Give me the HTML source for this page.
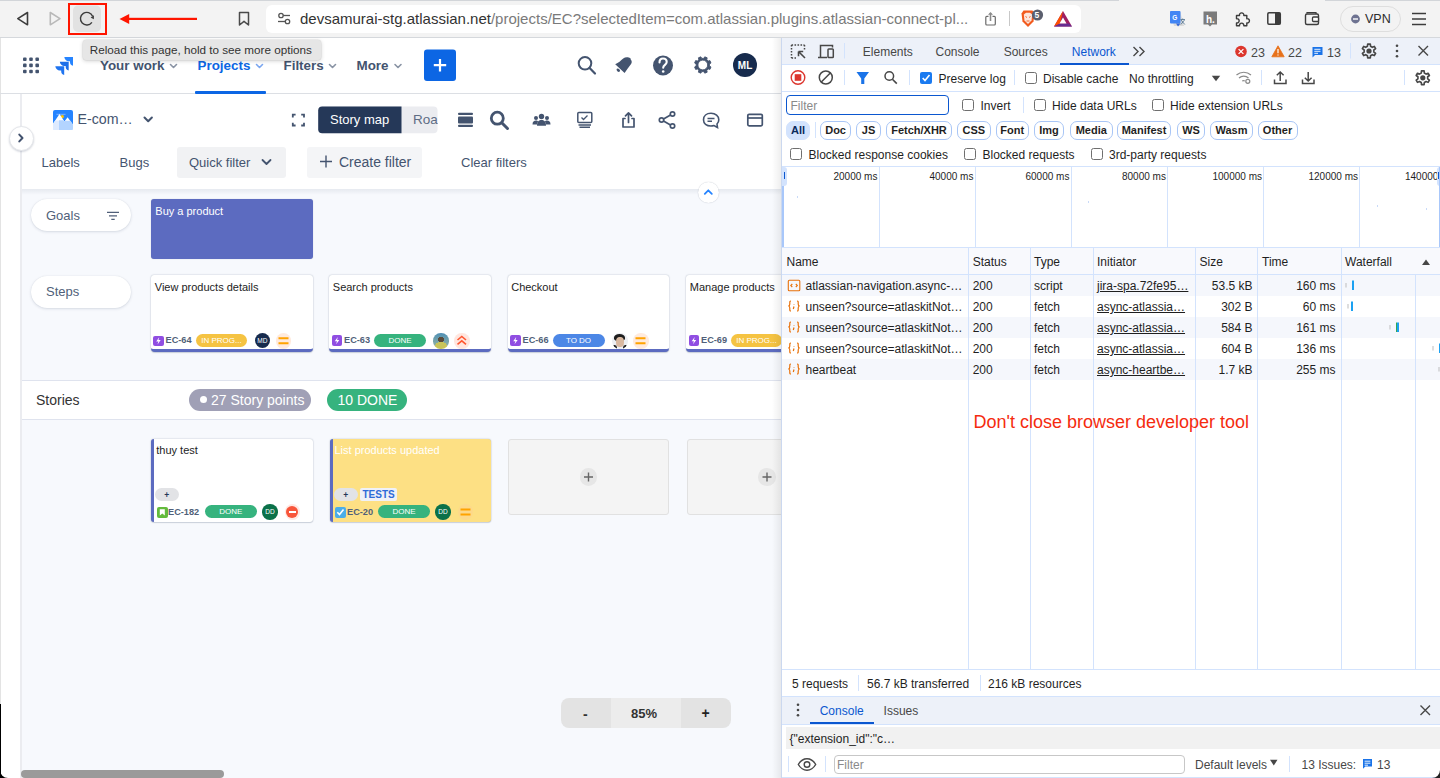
<!DOCTYPE html>
<html><head><meta charset="utf-8">
<style>
*{box-sizing:border-box;margin:0;padding:0}
html,body{width:1440px;height:778px;overflow:hidden;background:#fff}
body{position:relative;font-family:"Liberation Sans",sans-serif;color:#172b4d}
.a{position:absolute}
.t{position:absolute;white-space:nowrap;line-height:1}
svg{position:absolute;overflow:visible}
</style></head><body>

<!-- ============ BROWSER TOOLBAR ============ -->
<div class="a" style="left:0;top:0;width:1440px;height:38px;background:#f3f3f3;border-top:1px solid #d2d5d9;border-bottom:1px solid #d5d8dc"></div>
<div class="a" style="left:1119px;top:0;width:206px;height:1px;background:#f3f3f3"></div>
<!-- back / fwd / reload -->
<svg style="left:0;top:0" width="1440" height="38">
 <path d="M27.5 12.5 L27.5 24.8 L17.8 18.6 Z" fill="none" stroke="#3c3c3c" stroke-width="1.6" stroke-linejoin="round"/>
 <path d="M50.3 12.5 L50.3 24.8 L60 18.6 Z" fill="none" stroke="#b9b9b9" stroke-width="1.6" stroke-linejoin="round"/>
 <rect x="73" y="5.5" width="28" height="26.5" rx="5" fill="#e2e2e2"/>
 <path d="M92.6 16.3 A6.3 6.3 0 1 0 91.9 22.3" fill="none" stroke="#3c3c3c" stroke-width="1.4"/>
 <path d="M90.6 17.5 L94 15.3 L93.8 19.3 Z" fill="#3c3c3c"/>
 <!-- bookmark -->
 <path d="M239.5 12.5 H248.5 V25 L244 21.3 L239.5 25 Z" fill="none" stroke="#4a4a4a" stroke-width="1.5" stroke-linejoin="round"/>
</svg>
<!-- url bar -->
<div class="a" style="left:266px;top:5px;width:815px;height:27.5px;background:#fff;border-radius:6px"></div>
<svg style="left:0;top:0" width="1440" height="38">
 <g stroke="#555" stroke-width="1.3" fill="none">
  <circle cx="281" cy="15.5" r="2.2"/><line x1="283.2" y1="15.5" x2="290" y2="15.5"/>
  <circle cx="287.5" cy="21.5" r="2.2"/><line x1="278" y1="21.5" x2="285.3" y2="21.5"/>
 </g>
 <!-- share -->
 <g stroke="#6a6a6a" stroke-width="1.2" fill="none" stroke-linejoin="round">
  <path d="M988.5 16.3 H986.8 A1 1 0 0 0 985.8 17.3 V24 A1 1 0 0 0 986.8 25 H994.3 A1 1 0 0 0 995.3 24 V17.3 A1 1 0 0 0 994.3 16.3 H992.5"/>
 </g>
 <path d="M990.5 21 V13" stroke="#8a8a8a" stroke-width="1.6"/>
 <path d="M988 14.8 L990.5 12 L993 14.8 Z" fill="#8a8a8a"/>
 <line x1="1009.5" y1="11" x2="1009.5" y2="26" stroke="#c8c8c8" stroke-width="1"/>
 <!-- brave lion -->
 <path d="M1021.5 13.5 L1023.5 10.5 H1032.5 L1034.5 13.5 L1033.5 21.5 L1028 27 L1022.5 21.5 Z" fill="#f25a1d"/>
 <path d="M1023.8 14.5 L1026 12.8 H1030 L1032.3 14.5 L1031.5 20.5 L1028 24 L1024.5 20.5 Z" fill="#fff" opacity=".85"/><path d="M1025.5 16.5 L1027 17.5 M1030.5 16.5 L1029 17.5 M1026.5 21 H1029.5" stroke="#f25a1d" stroke-width=".9"/>
 <circle cx="1037.5" cy="15" r="5.6" fill="#5b5f6e"/>
 <!-- BAT triangle -->
 <path d="M1063 11 L1072 26.5 H1054 Z" fill="#9e1f63"/>
 <path d="M1063 11 L1054 26.5 L1060 23.5 Z" fill="#ff5000"/>
 <path d="M1054 26.5 H1072 L1069 23.5 H1060 Z" fill="#662d91"/>
 <path d="M1063 17.5 L1066.5 23.5 H1059.5 Z" fill="#fff"/>
 <!-- translate -->
 <path d="M1170 11 H1180 L1184 26 H1174 Z" fill="#dadada"/>
 <rect x="1170" y="11" width="10.5" height="12.5" rx="1" fill="#4285f4"/>
 <path d="M1176 23.5 L1180.5 23.5 L1178 26.5 Z" fill="#3367d6"/>
 <text x="1172.3" y="20.3" font-family="Liberation Sans" font-size="6.5" font-weight="700" fill="#fff">G</text>
 <path d="M1180.5 19.5 H1185 M1182.7 18.5 V19.5 M1181 20 L1184.8 24.5 M1184.5 20 L1180.8 24.5" stroke="#4a6d8c" stroke-width=".8" fill="none"/>
 <!-- h. -->
 <path d="M1203.5 11.5 H1217 V24.5 H1212 L1210 26.5 L1208 24.5 H1203.5 Z" fill="#7b7b7b"/>
 <text x="1206" y="22.5" font-family="Liberation Sans" font-size="10" font-weight="700" fill="#fff">h.</text>
 <!-- puzzle -->
 <path d="M1236.5 15.5 H1239.5 A2.2 2.2 0 1 1 1243.8 15.5 H1246.8 V18.7 A2.2 2.2 0 1 1 1246.8 23 V25.8 H1243.8 A2.2 2.2 0 1 0 1239.5 25.8 H1236.5 V23 A2.2 2.2 0 1 0 1236.5 18.7 Z" fill="none" stroke="#3c3c3c" stroke-width="1.4" stroke-linejoin="round"/>
 <!-- sidebar -->
 <rect x="1267.8" y="12.8" width="12.5" height="11.5" rx="1.2" fill="none" stroke="#3c3c3c" stroke-width="1.5"/>
 <rect x="1275" y="12.8" width="5.3" height="11.5" fill="#3c3c3c"/>
 <!-- wallet -->
 <rect x="1305.5" y="14" width="13" height="10.5" rx="1.5" fill="none" stroke="#3c3c3c" stroke-width="1.4"/>
 <path d="M1307 13.5 L1307 12.5 H1316 V14" fill="none" stroke="#3c3c3c" stroke-width="1.2"/>
 <rect x="1312.5" y="17" width="6" height="4.5" rx="1" fill="#fff" stroke="#3c3c3c" stroke-width="1.3"/>
 <!-- vpn pill -->
 <rect x="1340.5" y="6.5" width="60" height="25" rx="12.5" fill="#f3f3f3" stroke="#dedede"/>
 <circle cx="1355.5" cy="19" r="4.4" fill="#6e7391"/>
 <line x1="1353" y1="19" x2="1358" y2="19" stroke="#fff" stroke-width="1.4"/>
 <!-- hamburger -->
 <g stroke="#3c3c3c" stroke-width="1.5"><line x1="1412" y1="13.5" x2="1426" y2="13.5"/><line x1="1412" y1="19" x2="1426" y2="19"/><line x1="1412" y1="24.5" x2="1426" y2="24.5"/></g>
</svg>
<div class="t" style="left:1034.6px;top:10.5px;font-size:8.5px;font-weight:700;color:#fff">5</div>
<div class="t" style="left:300px;top:11.4px;font-size:15px;color:#333">devsamurai-stg.atlassian.net<span style="color:#7a7a7a">/projects/EC?selectedItem=com.atlassian.plugins.atlassian-connect-pl...</span></div>
<div class="t" style="left:1365px;top:13px;font-size:12.5px;color:#2c2c2c">VPN</div>

<!-- ============ JIRA ============ -->
<div class="a" id="jira" style="left:0;top:0;width:781px;height:778px;overflow:hidden">
<div class="a" style="left:0;top:38px;width:781px;height:740px;background:#fff"></div>
<!-- left window edge -->
<div class="a" style="left:0;top:38px;width:1px;height:740px;background:#e3e3e3"></div>
<!-- header -->
<div class="a" style="left:0;top:92.5px;width:781px;height:1px;background:#dcdfe4"></div>
<svg style="left:0;top:0" width="781" height="100">
 <g fill="#44546f">
  <rect x="23" y="57.5" width="3.6" height="3.6" rx="1"/><rect x="29.2" y="57.5" width="3.6" height="3.6" rx="1"/><rect x="35.4" y="57.5" width="3.6" height="3.6" rx="1"/>
  <rect x="23" y="63.6" width="3.6" height="3.6" rx="1"/><rect x="29.2" y="63.6" width="3.6" height="3.6" rx="1"/><rect x="35.4" y="63.6" width="3.6" height="3.6" rx="1"/>
  <rect x="23" y="69.7" width="3.6" height="3.6" rx="1"/><rect x="29.2" y="69.7" width="3.6" height="3.6" rx="1"/><rect x="35.4" y="69.7" width="3.6" height="3.6" rx="1"/>
 </g>
 <!-- jira logo -->
 <g>
  <path d="M64.3 57 H73 V65.8 C71 65.5 70 64 70 62 V61.2 H68.5 C66.5 61.2 64.6 59.5 64.3 57 Z" fill="#2684ff"/>
  <path d="M59.8 61.7 H68.7 V70.5 C66.7 70.2 65.7 68.7 65.7 66.7 V65.9 H64.2 C62.2 65.9 60.1 64.2 59.8 61.7 Z" fill="#1d6fe8"/>
  <path d="M55.3 66.2 H64.2 V75 C62.2 74.7 61.2 73.2 61.2 71.2 V70.4 H59.7 C57.7 70.4 55.6 68.7 55.3 66.2 Z" fill="#1f74f0"/>
 </g>
 <!-- chevrons -->
 <g fill="none" stroke="#8993a4" stroke-width="1.6" stroke-linecap="round" stroke-linejoin="round">
  <path d="M170.5 64.5 L173.5 67.5 L176.5 64.5"/>
  <path d="M329.5 64.5 L332.5 67.5 L335.5 64.5"/>
  <path d="M395 64.5 L398 67.5 L401 64.5"/>
 </g>
 <path d="M256.5 64.5 L259.5 67.5 L262.5 64.5" fill="none" stroke="#7aa6f0" stroke-width="1.6" stroke-linecap="round" stroke-linejoin="round"/>
 <!-- plus button -->
 <rect x="424" y="49.5" width="32" height="31.5" rx="3" fill="#0c66e4"/>
 <path d="M440 59 V71.5 M433.8 65.2 H446.2" stroke="#fff" stroke-width="2.2"/>
 <!-- search -->
 <circle cx="585" cy="63.3" r="6.3" fill="none" stroke="#44546f" stroke-width="2"/>
 <path d="M589.6 68 L595 73.5" stroke="#44546f" stroke-width="2.2" stroke-linecap="round"/>
 <!-- bell (tilted) -->
 <g fill="#44546f">
  <path d="M615.2 64.2 C618.5 62.8 620.8 60.5 623.2 58.4 C625.3 56.8 628.6 56.9 630.2 58.3 L630.7 58.4 L630.6 59.3 C632 60.8 632.2 62.8 630.9 64.3 C628.9 67.3 626.5 70 624.6 73 Z"/>
  <ellipse cx="618.3" cy="70.2" rx="2" ry="1.4" transform="rotate(45 618.3 70.2)"/>
 </g>
 <!-- help -->
 <circle cx="663" cy="65.5" r="10" fill="#44546f"/>
 <path d="M659.5 62.5 C659.5 59.5 661.3 58.5 663 58.5 C665.2 58.5 666.7 60 666.7 62 C666.7 64.8 663.2 65 663.2 67.8" fill="none" stroke="#fff" stroke-width="2.1" stroke-linecap="round"/>
 <circle cx="663.2" cy="71.5" r="1.3" fill="#fff"/>
 <!-- gear -->
 <g transform="translate(702.8 65)">
  <path fill="#44546f" fill-rule="evenodd" stroke="#44546f" stroke-width="0.9" stroke-linejoin="round" d="M1.05 -6.62 L1.96 -8.17 L4.39 -7.16 L3.94 -5.42 L5.42 -3.94 L7.16 -4.39 L8.17 -1.96 L6.62 -1.05 L6.62 1.05 L8.17 1.96 L7.16 4.39 L5.42 3.94 L3.94 5.42 L4.39 7.16 L1.96 8.17 L1.05 6.62 L-1.05 6.62 L-1.96 8.17 L-4.39 7.16 L-3.94 5.42 L-5.42 3.94 L-7.16 4.39 L-8.17 1.96 L-6.62 1.05 L-6.62 -1.05 L-8.17 -1.96 L-7.16 -4.39 L-5.42 -3.94 L-3.94 -5.42 L-4.39 -7.16 L-1.96 -8.17 L-1.05 -6.62 Z M4.9 0 A4.9 4.9 0 1 0 -4.9 0 A4.9 4.9 0 1 0 4.9 0 Z"/>
 </g>
 <!-- avatar -->
 <circle cx="745" cy="65" r="12" fill="#172b4d"/>
</svg>
<div class="t" style="left:100px;top:59.3px;font-size:13.4px;font-weight:700;color:#44546f">Your work</div>
<div class="t" style="left:197.5px;top:59.3px;font-size:13.4px;font-weight:700;color:#0c66e4">Projects</div>
<div class="t" style="left:283.5px;top:59.3px;font-size:13.4px;font-weight:700;color:#44546f">Filters</div>
<div class="t" style="left:356.5px;top:59.3px;font-size:13.4px;font-weight:700;color:#44546f">More</div>
<div class="a" style="left:195px;top:90.5px;width:70.5px;height:3px;background:#0c66e4;border-radius:1px"></div>
<div class="t" style="left:737.8px;top:60.8px;font-size:10px;font-weight:700;color:#fff">ML</div>

<!-- sidebar strip -->
<div class="a" style="left:20px;top:93.5px;width:2px;height:685px;background:#ebecf0"></div>

<!-- project toolbar -->
<svg style="left:0;top:0" width="781" height="200">
 <!-- project avatar -->
 <rect x="53" y="110" width="20" height="20" rx="2" fill="#2684ff"/>
 <path d="M56.5 114.3 H65.5" stroke="#7fb3ff" stroke-width="1"/>
 <circle cx="62.3" cy="116.6" r="1.7" fill="#ffc400"/>
 <path d="M53 123.8 L59.5 114.1 L64.4 121.5 L67.6 117.2 L73 124.8 V128.5 A1.5 1.5 0 0 1 71.5 130 H54.5 A1.5 1.5 0 0 1 53 128.5 Z" fill="#fff"/>
 <path d="M53 123.8 L55.2 120.5 H59 V130 H54.5 A1.5 1.5 0 0 1 53 128.5 Z" fill="#deebff"/>
 <path d="M59 120.3 H63.2 L64.4 121.5 L65.3 120.8 H70.6 L73 124.8 V128.5 A1.5 1.5 0 0 1 71.5 130 H59 Z" fill="#b3d4ff"/>
 <path d="M144.5 117.5 L148.2 121.2 L151.9 117.5" fill="none" stroke="#44546f" stroke-width="2" stroke-linecap="round" stroke-linejoin="round"/>
 <!-- fullscreen -->
 <g fill="none" stroke="#44546f" stroke-width="1.8">
  <path d="M292.8 117.5 V114.7 H295.6 M301.2 114.7 H304 V117.5 M304 122.7 V125.5 H301.2 M295.6 125.5 H292.8 V122.7"/>
 </g>
 <!-- segmented -->
 <rect x="318.2" y="106.6" width="119.3" height="26.6" rx="4" fill="#ebecf0"/>
 <path d="M322.2 106.6 H401.5 V133.2 H322.2 A4 4 0 0 1 318.2 129.2 V110.6 A4 4 0 0 1 322.2 106.6 Z" fill="#253858"/>
 <!-- stacked icon -->
 <g fill="#44546f">
  <rect x="458" y="112.7" width="15" height="2.3" rx="1"/>
  <rect x="458" y="116.5" width="15" height="7" rx="1"/>
  <rect x="458" y="124.7" width="15" height="2.2" rx="1"/>
 </g>
 <!-- search big -->
 <circle cx="497.3" cy="118.2" r="6" fill="none" stroke="#44546f" stroke-width="2.8"/>
 <path d="M502 123 L507.5 128.5" stroke="#44546f" stroke-width="3" stroke-linecap="round"/>
 <!-- people -->
 <g fill="#44546f">
  <circle cx="541.5" cy="116.5" r="2.7"/><circle cx="536" cy="118" r="2"/><circle cx="547" cy="118" r="2"/>
  <path d="M537 125.8 C537 121.5 539 120 541.5 120 C544 120 546 121.5 546 125.8 Z"/>
  <path d="M532.5 124.5 C532.5 121.5 534 120.5 536 120.5 C537 120.5 537.8 121 538.2 121.5 C537.5 122.5 537 123.5 537 124.5 Z"/>
  <path d="M550.5 124.5 C550.5 121.5 549 120.5 547 120.5 C546 120.5 545.2 121 544.8 121.5 C545.5 122.5 546 123.5 546 124.5 Z"/>
 </g>
 <!-- board -->
 <g fill="none" stroke="#44546f" stroke-width="1.5">
  <rect x="577.8" y="112.6" width="14" height="10" rx="1"/>
  <path d="M581.5 117.5 L583.5 119.5 L587.5 115.5" stroke-width="1.3"/>
  <path d="M578.5 125 H591 M579.5 127.3 H590"/>
 </g>
 <!-- share up -->
 <g fill="none" stroke="#44546f" stroke-width="1.7" stroke-linejoin="round" stroke-linecap="round">
  <path d="M625 118.5 H623 V127 H634 V118.5 H632"/>
  <path d="M628.5 122.5 V112.8 M625.5 115.8 L628.5 112.8 L631.5 115.8"/>
 </g>
 <!-- share nodes -->
 <g fill="none" stroke="#44546f" stroke-width="1.7">
  <circle cx="661.5" cy="120" r="2.2"/><circle cx="672.5" cy="114" r="2.2"/><circle cx="672.5" cy="126" r="2.2"/>
  <path d="M663.5 119 L670.5 115 M663.5 121 L670.5 125"/>
 </g>
 <!-- comment -->
 <g fill="none" stroke="#44546f" stroke-width="1.6">
  <path d="M711 113.3 C706.5 113.3 703.5 116 703.5 119.8 C703.5 123.5 706.5 126 711 126 C712 126 713 125.8 714 125.5 L717.5 127.5 L717 124 C718.3 122.8 718.8 121.3 718.8 119.8 C718.8 116 715.5 113.3 711 113.3 Z"/>
  <path d="M707.5 118.5 H714.5 M707.5 121.3 H712"/>
 </g>
 <!-- window -->
 <g fill="none" stroke="#44546f" stroke-width="1.7">
  <rect x="747.8" y="114.3" width="14.5" height="11.5" rx="1.3"/>
  <path d="M747.8 118 H762.3"/>
 </g>
</svg>
<div class="t" style="left:77.5px;top:112.3px;font-size:14.2px;color:#44546f">E-com…</div>
<div class="t" style="left:330px;top:113px;font-size:13px;color:#fff">Story map</div>
<div class="a" style="left:401.5px;top:106px;width:36px;height:28px;overflow:hidden"><div class="t" style="left:11.5px;top:7px;font-size:13.5px;color:#5e6c84">Roa</div></div>

<!-- expand circle -->
<div class="a" style="left:8.5px;top:125.7px;width:25px;height:25px;border-radius:50%;background:#fff;border:1px solid #e4e6ea;box-shadow:0 1px 2px rgba(9,30,66,.18)"></div>
<svg style="left:0;top:0" width="100" height="200"><path d="M19.3 134.6 L22.5 138 L19.3 141.4" fill="none" stroke="#42526e" stroke-width="2" stroke-linecap="round" stroke-linejoin="round"/></svg>

<!-- filter row -->
<div class="t" style="left:41.5px;top:155.7px;font-size:13px;color:#44546f">Labels</div>
<div class="t" style="left:119.5px;top:155.7px;font-size:13px;color:#44546f">Bugs</div>
<div class="a" style="left:177.2px;top:147px;width:108.8px;height:31px;border-radius:3px;background:#f1f2f4"></div>
<div class="t" style="left:189px;top:155.5px;font-size:13px;color:#44546f">Quick filter</div>
<svg style="left:0;top:0" width="781" height="200"><path d="M262.5 160 L266.5 164 L270.5 160" fill="none" stroke="#44546f" stroke-width="1.8" stroke-linecap="round" stroke-linejoin="round"/></svg>
<div class="a" style="left:307px;top:147px;width:115.3px;height:31px;border-radius:3px;background:#f4f5f7"></div>
<svg style="left:0;top:0" width="781" height="200"><path d="M326 155.5 V167.5 M320 161.5 H332" stroke="#44546f" stroke-width="1.4"/></svg>
<div class="t" style="left:338.9px;top:155px;font-size:14px;color:#44546f">Create filter</div>
<div class="t" style="left:461px;top:155.8px;font-size:13px;color:#44546f">Clear filters</div>

<!-- canvas -->
<div class="a" style="left:22px;top:188.5px;width:759px;height:590px;background:#f7f9fd"></div>
<div class="a" style="left:22px;top:188.5px;width:759px;height:6px;background:linear-gradient(rgba(9,30,66,.07),rgba(9,30,66,0))"></div>
<!-- collapse up -->
<div class="a" style="left:698px;top:181.5px;width:21px;height:21px;border-radius:50%;background:#fff;box-shadow:0 0 1px rgba(9,30,66,.3)"></div>
<svg style="left:0;top:0" width="781" height="220"><path d="M704.8 193.8 L708.3 190.3 L711.8 193.8" fill="none" stroke="#2684ff" stroke-width="1.8" stroke-linecap="round" stroke-linejoin="round"/></svg>
<style>
.pill{position:absolute;left:31px;width:100px;height:32.3px;border-radius:16px;background:#fff;box-shadow:0 1px 3px rgba(9,30,66,.13),0 0 1px rgba(9,30,66,.12)}
.card{position:absolute;width:161.6px;border-radius:3px;background:#fff;box-shadow:0 0 1.5px rgba(9,30,66,.35),0 1px 1px rgba(9,30,66,.12)}
.step{top:275.4px;height:76.4px;border-bottom:3px solid #5c6bc0;border-radius:3px 3px 4px 4px}
.ttl{position:absolute;left:3.5px;top:7px;font-size:11px;line-height:1;color:#1d1d1d;white-space:nowrap}
.epic{position:absolute;width:10.5px;height:10.5px;border-radius:2px;background:#904ee2}
.key{position:absolute;font-size:9.2px;font-weight:700;color:#505f79;line-height:1;white-space:nowrap}
.lz{position:absolute;height:13px;border-radius:6.5px;color:#fff;font-size:8px;line-height:13px;text-align:center;white-space:nowrap;overflow:hidden}
.av{position:absolute;width:15.5px;height:15.5px;border-radius:50%}
.pr{position:absolute;width:15.5px;height:15.5px;border-radius:50%}
</style>
<div class="pill" style="top:199px"></div>
<div class="t" style="left:46px;top:208.5px;font-size:13px;color:#505f79">Goals</div>
<svg style="left:0;top:0" width="781" height="240"><path d="M107 212.3 H119 M109 215.8 H117 M111.3 219.3 H114.7" stroke="#505f79" stroke-width="1.3"/></svg>
<div class="a" style="left:151.25px;top:199px;width:161.6px;height:59.6px;border-radius:3px;background:#5c6bc0;box-shadow:0 0 1px rgba(9,30,66,.3)"></div>
<div class="t" style="left:155.3px;top:206px;font-size:11px;color:#fff">Buy a product</div>

<div class="pill" style="top:275.6px"></div>
<div class="t" style="left:46px;top:285px;font-size:13px;color:#505f79">Steps</div>

<!-- step cards -->
<div class="card step" style="left:151.25px"><div class="ttl">View products details</div></div>
<div class="card step" style="left:329.3px"><div class="ttl">Search products</div></div>
<div class="card step" style="left:507.7px"><div class="ttl">Checkout</div></div>
<div class="card step" style="left:686.25px"><div class="ttl">Manage products</div></div>
<div class="epic" style="left:153.2px;top:335.5px"></div>
<div class="epic" style="left:331.8px;top:335.3px"></div>
<div class="epic" style="left:510.2px;top:335.3px"></div>
<div class="epic" style="left:688.7px;top:335.3px"></div>
<svg style="left:0;top:0" width="781" height="360">
 <defs><g id="bolt"><path d="M6 1.8 L3 6 H5.2 L4.3 9 L7.5 4.6 H5.3 Z" fill="#fff"/></g></defs>
 <g transform="translate(153.2 335.5)"><use href="#bolt"/></g>
 <g transform="translate(331.8 335.3)"><use href="#bolt"/></g>
 <g transform="translate(510.2 335.3)"><use href="#bolt"/></g>
 <g transform="translate(688.7 335.3)"><use href="#bolt"/></g>
</svg>
<div class="key" style="left:165.5px;top:336.3px">EC-64</div>
<div class="key" style="left:344px;top:336.3px">EC-63</div>
<div class="key" style="left:522.5px;top:336.3px">EC-66</div>
<div class="key" style="left:701px;top:336.3px">EC-69</div>
<div class="lz" style="left:196px;top:334px;width:51px;background:#f5c342">IN PROG...</div>
<div class="lz" style="left:374px;top:334px;width:52px;background:#36b37e">DONE</div>
<div class="lz" style="left:552.5px;top:334px;width:52px;background:#4c87e6">TO DO</div>
<div class="lz" style="left:731px;top:334px;width:51px;background:#f5c342">IN PROG...</div>
<!-- avatars -->
<div class="av" style="left:254.5px;top:332.8px;background:#172b4d"></div>
<div class="t" style="left:257.3px;top:337.6px;font-size:6.5px;color:#fff">MD</div>
<div class="av" style="left:433px;top:333px;background:radial-gradient(circle at 50% 40%,#5b4a3a 0 22%,transparent 23%),radial-gradient(circle at 50% 95%,#c9c45a 0 38%,transparent 39%),linear-gradient(#4f8fb5,#9bb7a0)"></div>
<div class="av" style="left:612px;top:333px;overflow:hidden;background:#eceef2"><div class="a" style="left:2px;top:1px;width:11px;height:7px;border-radius:50% 50% 40% 40%;background:#1e1e1e"></div><div class="a" style="left:4px;top:4px;width:8px;height:10px;border-radius:45%;background:#d9b8a0"></div><div class="a" style="left:0;top:11.5px;width:4.5px;height:5px;border-radius:50%;background:#222"></div><div class="a" style="left:11px;top:11.5px;width:4.5px;height:5px;border-radius:50%;background:#222"></div></div>
<div class="pr" style="left:275.5px;top:333px;background:#ffeadd"></div>
<div class="pr" style="left:454px;top:333px;background:#ffe6df"></div>
<div class="pr" style="left:633px;top:333px;background:#ffeadd"></div>
<svg style="left:0;top:0" width="781" height="360">
 <path d="M278.5 338.2 H288.5 M278.5 343.2 H288.5" stroke="#ffa300" stroke-width="2"/>
 <path d="M635.5 338.2 H645.5 M635.5 343.2 H645.5" stroke="#ffa300" stroke-width="2"/>
 <path d="M457.5 340 L461.8 336.5 L466 340 M457.5 344.3 L461.8 340.8 L466 344.3" fill="none" stroke="#ff5630" stroke-width="1.6"/>
</svg>

<!-- stories band -->
<div class="a" style="left:22px;top:380px;width:759px;height:39.5px;background:#fff;border-top:1px solid #dfe3ee;border-bottom:1px solid #dfe3ee"></div>
<div class="t" style="left:36px;top:393px;font-size:14px;color:#333">Stories</div>
<div class="a" style="left:189.4px;top:389px;width:121.4px;height:21.8px;border-radius:11px;background:#a0a0b6"></div>
<div class="a" style="left:199.8px;top:396px;width:7.3px;height:7.3px;border-radius:50%;background:#fff"></div>
<div class="t" style="left:211px;top:393px;font-size:14px;color:#fff">27 Story points</div>
<div class="a" style="left:327px;top:389px;width:79.7px;height:21.8px;border-radius:11px;background:#36b37e"></div>
<div class="t" style="left:337.5px;top:393px;font-size:14px;color:#fff">10 DONE</div>

<!-- story cards -->
<div class="card" style="left:151.25px;top:438.75px;height:83.3px;border-left:3px solid #5c6bc0"><div class="ttl" style="left:2px;top:6px">thuy test</div></div>
<div class="card" style="left:329.5px;top:438.75px;height:83.3px;border-left:3px solid #5c6bc0;background:#fde084"><div class="ttl" style="left:2px;top:6px;color:#fff">List products updated</div></div>
<div class="a" style="left:155px;top:488px;width:24px;height:13px;border-radius:6.5px;background:#e2e3e6"></div>
<div class="t" style="left:164.3px;top:490.5px;font-size:8.5px;font-weight:700;color:#253858">+</div>
<div class="a" style="left:334px;top:488px;width:24px;height:13px;border-radius:6.5px;background:#e2e3e6"></div>
<div class="t" style="left:343.3px;top:490.5px;font-size:8.5px;font-weight:700;color:#253858">+</div>
<div class="a" style="left:360px;top:488px;width:36.5px;height:13px;border-radius:2px;background:#eff1f7"></div>
<div class="t" style="left:362.5px;top:489.5px;font-size:10px;font-weight:700;color:#2e6bd8">TESTS</div>
<div class="a" style="left:157px;top:507px;width:10.5px;height:10.5px;border-radius:2px;background:#63ba3c"></div>
<svg style="left:0;top:0" width="781" height="540">
 <path d="M159.8 509.3 H164.8 V515.5 L162.3 513.5 L159.8 515.5 Z" fill="#fff"/>
</svg>
<div class="a" style="left:335px;top:507px;width:10.5px;height:10.5px;border-radius:2px;background:#4bade8"></div>
<svg style="left:0;top:0" width="781" height="540">
 <path d="M337.3 512.3 L339.5 514.5 L343.5 509.5" fill="none" stroke="#fff" stroke-width="1.6"/>
</svg>
<div class="key" style="left:168px;top:507.8px">EC-182</div>
<div class="key" style="left:347px;top:507.8px">EC-20</div>
<div class="lz" style="left:204.5px;top:505.3px;width:52.5px;background:#36b37e">DONE</div>
<div class="lz" style="left:378px;top:505.3px;width:52px;background:#36b37e">DONE</div>
<div class="av" style="left:262px;top:504.3px;background:#0b7149"></div>
<div class="t" style="left:265.3px;top:509.2px;font-size:6.5px;color:#fff">DD</div>
<div class="av" style="left:435px;top:504.3px;background:#0b7149"></div>
<div class="t" style="left:438.3px;top:509.2px;font-size:6.5px;color:#fff">DD</div>
<div class="pr" style="left:284.5px;top:504.3px;background:#ffe9e4"></div>
<div class="a" style="left:286.2px;top:506px;width:12px;height:12px;border-radius:50%;background:#f8553a"></div>
<div class="a" style="left:288.5px;top:511.3px;width:7.5px;height:1.6px;background:#fff"></div>
<div class="pr" style="left:457.5px;top:504.3px;background:#fdd98a"></div>
<svg style="left:0;top:0" width="781" height="540">
 <path d="M460.5 509.5 H470.5 M460.5 514.5 H470.5" stroke="#ffa300" stroke-width="2"/>
</svg>

<!-- empty cards -->
<div class="a" style="left:508.3px;top:439.4px;width:161px;height:75.6px;border-radius:3px;background:#f4f4f4;border:1px solid #e1e1e1"></div>
<div class="a" style="left:686.5px;top:439.4px;width:161px;height:75.6px;border-radius:3px;background:#f4f4f4;border:1px solid #e1e1e1"></div>
<div class="a" style="left:579.8px;top:468.3px;width:17.5px;height:17.5px;border-radius:50%;background:#e6e6e6"></div>
<div class="a" style="left:758.2px;top:468.3px;width:17.5px;height:17.5px;border-radius:50%;background:#e6e6e6"></div>
<svg style="left:0;top:0" width="781" height="540">
 <path d="M588.5 472.5 V481.5 M584 477 H593 M767 472.5 V481.5 M762.5 477 H771.5" stroke="#666" stroke-width="1.4"/>
</svg>

<!-- zoom control -->
<div class="a" style="left:560.8px;top:698px;width:170.2px;height:29.8px;border-radius:8px;background:#e3e3e3;overflow:hidden"><div class="a" style="left:50.2px;top:0;width:70px;height:30px;background:#ececec"></div></div>
<div class="t" style="left:583px;top:706.5px;font-size:14px;font-weight:700;color:#333">-</div>
<div class="t" style="left:631px;top:706.5px;font-size:13px;font-weight:700;color:#333">85%</div>
<div class="t" style="left:701.5px;top:705.5px;font-size:14px;font-weight:700;color:#222">+</div>
<!-- scrollbar -->
<div class="a" style="left:21px;top:770px;width:202.5px;height:7.5px;border-radius:4px;background:#9a9a9a"></div>
<!-- right edge shadow -->
<div class="a" style="left:772px;top:38px;width:9px;height:740px;background:linear-gradient(90deg,rgba(0,0,0,0),rgba(0,0,0,.065))"></div>

</div>

<!-- ============ DEVTOOLS ============ -->
<div class="a" id="dt" style="left:0;top:0;width:1440px;height:778px;clip-path:inset(38px 0 0 781px)">
<div class="a" style="left:781px;top:38px;width:659px;height:740px;background:#fff;border-left:1px solid #cbd8ef"></div>
<style>
.dt{position:absolute;white-space:nowrap;line-height:1;font-size:12px;color:#1f1f1f}
.hl{position:absolute;height:1px;background:#d3e3fd}
.vl{position:absolute;width:1px;background:#d3e3fd}
.cb{position:absolute;width:12px;height:12px;border:1px solid #6f6f6f;border-radius:2.5px;background:#fff}
.chip{position:absolute;top:120.6px;height:19px;border:1px solid #a9c6f6;border-radius:7px;font-size:11px;font-weight:700;line-height:17px;text-align:center;color:#1f1f1f;white-space:nowrap}
</style>
<!-- tab bar -->
<div class="a" style="left:782px;top:38px;width:658px;height:26px;background:#edf1f9"></div>
<div class="hl" style="left:782px;top:64px;width:658px"></div>
<div class="hl" style="left:782px;top:90.8px;width:658px"></div>
<svg style="left:0;top:0" width="1440" height="100">
 <!-- inspect -->
 <g stroke="#474747" stroke-width="1.5" fill="none">
  <path d="M791.5 45 V58 M791.5 45 H804.5" stroke-dasharray="1.6 1.4"/>
  <path d="M804.5 45 V50 M791.5 58 H796" stroke-dasharray="1.6 1.4"/>
  <path d="M798.5 51.5 L805 58 M798.5 51.5 V56.2 M798.5 51.5 H803.2" stroke-width="1.6"/>
 </g>
 <!-- device -->
 <g stroke="#474747" stroke-width="1.5" fill="none">
  <path d="M820.5 57.5 V45.5 H832.5 V47.5"/>
  <path d="M818 57.5 H827"/>
  <rect x="828" y="49" width="5.3" height="8.5" rx=".8"/>
 </g>
 <line x1="844.5" y1="43" x2="844.5" y2="58.5" stroke="#d3e3fd"/>
 <!-- >> -->
 <path d="M1133.5 47 L1138 51.5 L1133.5 56 M1139.5 47 L1144 51.5 L1139.5 56" fill="none" stroke="#474747" stroke-width="1.4"/>
 <!-- error -->
 <circle cx="1241" cy="51.5" r="5.8" fill="#dc362e"/>
 <path d="M1238.6 49.1 L1243.4 53.9 M1243.4 49.1 L1238.6 53.9" stroke="#fff" stroke-width="1.2"/>
 <!-- warn -->
 <path d="M1278 45.8 L1284.2 56.8 H1271.8 Z" fill="#e7711b" stroke="#e7711b" stroke-width=".8" stroke-linejoin="round"/>
 <path d="M1278 49 V53.3 M1278 54.5 V55.5" stroke="#fff" stroke-width="1.2"/>
 <!-- info -->
 <path d="M1312.5 47 H1322.5 V55 H1315 L1312.5 57.5 Z" fill="#1a73e8"/>
 <path d="M1314.3 49.3 H1320.5 M1314.3 51.3 H1320.5 M1314.3 53.3 H1318" stroke="#fff" stroke-width=".9"/>
 <line x1="1350.5" y1="43" x2="1350.5" y2="58.5" stroke="#d3e3fd"/>
 <!-- gear tb -->
 <g transform="translate(1369 51) scale(1.13)">
  <path fill="none" stroke="#474747" stroke-width="1.45" stroke-linejoin="round" d="M-1.36 -4.18 L-1.16 -6.09 L1.16 -6.09 L1.36 -4.18 L2.94 -3.27 L4.69 -4.05 L5.86 -2.04 L4.30 -0.91 L4.30 0.91 L5.86 2.04 L4.69 4.05 L2.94 3.27 L1.36 4.18 L1.16 6.09 L-1.16 6.09 L-1.36 4.18 L-2.94 3.27 L-4.69 4.05 L-5.86 2.04 L-4.30 0.91 L-4.30 -0.91 L-5.86 -2.04 L-4.69 -4.05 L-2.94 -3.27 Z"/>
  <circle r="2.3" fill="#474747"/>
 </g>
 <!-- kebab -->
 <g fill="#474747"><circle cx="1397" cy="45.8" r="1.3"/><circle cx="1397" cy="51" r="1.3"/><circle cx="1397" cy="56.2" r="1.3"/></g>
 <!-- close -->
 <path d="M1418.5 46 L1428 55.5 M1428 46 L1418.5 55.5" stroke="#474747" stroke-width="1.4"/>

 <!-- row2 -->
 <circle cx="798" cy="77.5" r="6.8" fill="none" stroke="#dc362e" stroke-width="1.4"/>
 <rect x="794.7" y="74.2" width="6.6" height="6.6" fill="#dc362e"/>
 <circle cx="825.8" cy="77.5" r="6.5" fill="none" stroke="#474747" stroke-width="1.5"/>
 <path d="M821.3 82 L830.3 73" stroke="#474747" stroke-width="1.5"/>
 <line x1="844.5" y1="70" x2="844.5" y2="85" stroke="#d3e3fd"/>
 <path d="M856.5 72 H869 L864.3 78.5 V84 H861.2 V78.5 Z" fill="#1a73e8"/>
 <circle cx="889.3" cy="76" r="4.3" fill="none" stroke="#474747" stroke-width="1.5"/>
 <path d="M892.4 79.2 L896.8 83.6" stroke="#474747" stroke-width="1.6"/>
 <line x1="909.5" y1="70" x2="909.5" y2="85" stroke="#d3e3fd"/>
 <rect x="920" y="72" width="12" height="12" rx="2" fill="#1a7af0"/>
 <path d="M922.7 78 L925 80.5 L929.5 75" fill="none" stroke="#fff" stroke-width="1.6"/>
 <line x1="1014.5" y1="70" x2="1014.5" y2="85" stroke="#d3e3fd"/>
 <path d="M1211.8 75.8 H1220.2 L1216 81.3 Z" fill="#474747"/>
 <!-- wifi gear -->
 <g fill="none" stroke="#8a8a8a" stroke-width="1.2">
  <path d="M1236.5 75 A11 11 0 0 1 1251 75"/>
  <path d="M1239 78 A7 7 0 0 1 1248.5 78"/>
  <path d="M1242.2 81 A3 3 0 0 1 1244.8 81" />
  <circle cx="1247.8" cy="81.3" r="2"/>
 </g>
 <line x1="1261.5" y1="70" x2="1261.5" y2="85" stroke="#d3e3fd"/>
 <g fill="none" stroke="#474747" stroke-width="1.5">
  <path d="M1274.5 79.5 V83.5 H1286 V79.5"/><path d="M1280.2 81 V72 M1276.8 75.3 L1280.2 72 L1283.6 75.3"/>
  <path d="M1302.5 79.5 V83.5 H1314 V79.5"/><path d="M1308.2 72 V81 M1304.8 77.7 L1308.2 81 L1311.6 77.7"/>
 </g>
 <line x1="1404.5" y1="70" x2="1404.5" y2="85" stroke="#d3e3fd"/>
 <g transform="translate(1422.8 77.8) scale(1.13)">
  <path fill="none" stroke="#474747" stroke-width="1.45" stroke-linejoin="round" d="M-1.36 -4.18 L-1.16 -6.09 L1.16 -6.09 L1.36 -4.18 L2.94 -3.27 L4.69 -4.05 L5.86 -2.04 L4.30 -0.91 L4.30 0.91 L5.86 2.04 L4.69 4.05 L2.94 3.27 L1.36 4.18 L1.16 6.09 L-1.16 6.09 L-1.36 4.18 L-2.94 3.27 L-4.69 4.05 L-5.86 2.04 L-4.30 0.91 L-4.30 -0.91 L-5.86 -2.04 L-4.69 -4.05 L-2.94 -3.27 Z"/>
  <circle r="2.3" fill="#474747"/>
 </g>
</svg>
<div class="dt" style="left:862.8px;top:46px;color:#474747">Elements</div>
<div class="dt" style="left:935.5px;top:46px;color:#474747">Console</div>
<div class="dt" style="left:1003.7px;top:46px;color:#474747">Sources</div>
<div class="dt" style="left:1071.8px;top:46px;color:#0b57d0">Network</div>
<div class="a" style="left:1060px;top:63px;width:69px;height:2px;background:#0b57d0"></div>
<div class="dt" style="left:1251px;top:46.5px;font-size:12.5px;color:#474747">23</div>
<div class="dt" style="left:1288px;top:46.5px;font-size:12.5px;color:#474747">22</div>
<div class="dt" style="left:1327px;top:47px;font-size:12.5px;color:#474747">13</div>
<div class="dt" style="left:938.5px;top:73.2px">Preserve log</div>
<div class="cb" style="left:1024.5px;top:72px"></div>
<div class="dt" style="left:1043px;top:73.2px">Disable cache</div>
<div class="dt" style="left:1129px;top:73.2px">No throttling</div>

<!-- filter row -->
<div class="a" style="left:786px;top:95px;width:163px;height:20px;border:1.5px solid #0b57d0;border-radius:4px;background:#fff"></div>
<div class="dt" style="left:790.5px;top:99.5px;color:#8a8a8a">Filter</div>
<div class="cb" style="left:962px;top:98.5px"></div>
<div class="dt" style="left:980.5px;top:99.8px">Invert</div>
<div class="vl" style="left:1023px;top:97px;height:16px"></div>
<div class="cb" style="left:1034px;top:98.5px"></div>
<div class="dt" style="left:1052px;top:99.8px">Hide data URLs</div>
<div class="cb" style="left:1152px;top:98.5px"></div>
<div class="dt" style="left:1170px;top:99.8px">Hide extension URLs</div>
<!-- chips -->
<div class="chip" style="left:786px;width:24px;border-color:#d3e3fd;background:#d3e3fd;color:#0a2a5c">All</div>
<div class="vl" style="left:815px;top:122px;height:16px"></div>
<div class="chip" style="left:819.7px;width:31.8px">Doc</div>
<div class="chip" style="left:856px;width:25px">JS</div>
<div class="chip" style="left:886px;width:66px">Fetch/XHR</div>
<div class="chip" style="left:957px;width:33.5px">CSS</div>
<div class="chip" style="left:995.5px;width:33.5px">Font</div>
<div class="chip" style="left:1034px;width:30px">Img</div>
<div class="chip" style="left:1069.5px;width:43.5px">Media</div>
<div class="chip" style="left:1117px;width:54px">Manifest</div>
<div class="chip" style="left:1177px;width:28px">WS</div>
<div class="chip" style="left:1210px;width:43px">Wasm</div>
<div class="chip" style="left:1257.5px;width:40px">Other</div>
<!-- blocked row -->
<div class="cb" style="left:790px;top:147.5px"></div>
<div class="dt" style="left:808.5px;top:149px">Blocked response cookies</div>
<div class="cb" style="left:964px;top:147.5px"></div>
<div class="dt" style="left:982.5px;top:149px">Blocked requests</div>
<div class="cb" style="left:1091px;top:147.5px"></div>
<div class="dt" style="left:1109px;top:149px">3rd-party requests</div>
<div class="hl" style="left:782px;top:166px;width:658px"></div>

<!-- overview -->
<div class="vl" style="left:878.5px;top:167px;height:80px"></div>
<div class="vl" style="left:974.5px;top:167px;height:80px"></div>
<div class="vl" style="left:1070.5px;top:167px;height:80px"></div>
<div class="vl" style="left:1167px;top:167px;height:80px"></div>
<div class="vl" style="left:1263.3px;top:167px;height:80px"></div>
<div class="vl" style="left:1359.3px;top:167px;height:80px"></div>
<div class="dt" style="left:833.5px;top:172px;font-size:10px;color:#1f1f1f">20000 ms</div>
<div class="dt" style="left:929.5px;top:172px;font-size:10px;color:#1f1f1f">40000 ms</div>
<div class="dt" style="left:1025.5px;top:172px;font-size:10px;color:#1f1f1f">60000 ms</div>
<div class="dt" style="left:1122px;top:172px;font-size:10px;color:#1f1f1f">80000 ms</div>
<div class="dt" style="left:1212.5px;top:172px;font-size:10px;color:#1f1f1f">100000 ms</div>
<div class="dt" style="left:1308.5px;top:172px;font-size:10px;color:#1f1f1f">120000 ms</div>
<div class="dt" style="left:1405px;top:172px;font-size:10px;color:#1f1f1f">140000 ms</div>
<div class="a" style="left:782px;top:167px;width:2px;height:80px;background:#a8c7fa"></div>
<div class="a" style="left:782px;top:167px;width:4.5px;height:18.5px;background:#d3e3fd;border-radius:0 3px 3px 0"></div>
<div class="a" style="left:783.5px;top:171.5px;width:1.2px;height:7px;background:#0b57d0"></div>
<div class="a" style="left:1437px;top:167px;width:4px;height:18.5px;background:#d3e3fd;border-radius:3px 0 0 3px"></div>
<div class="a" style="left:1438.3px;top:171.5px;width:1.5px;height:7px;background:#0b57d0"></div>
<div class="a" style="left:1439px;top:167px;width:1px;height:80px;background:#a8c7fa"></div>
<div class="a" style="left:797px;top:196px;width:1px;height:2px;background:#c9daf8"></div>
<div class="a" style="left:1087.5px;top:201px;width:1px;height:2px;background:#c9daf8"></div>
<div class="a" style="left:1376.5px;top:205px;width:1px;height:2px;background:#c9daf8"></div>
<div class="a" style="left:1425.5px;top:208px;width:1px;height:2px;background:#c9daf8"></div>
<div class="hl" style="left:782px;top:247px;width:658px"></div>

<!-- table -->
<div class="a" style="left:782px;top:248px;width:658px;height:26.5px;background:#f8f9fd"></div>
<div class="hl" style="left:782px;top:274.3px;width:658px"></div>
<div class="a" style="left:782px;top:275px;width:658px;height:21px;background:#f5f7fc"></div>
<div class="a" style="left:782px;top:317px;width:658px;height:21px;background:#f5f7fc"></div>
<div class="a" style="left:782px;top:359px;width:658px;height:21px;background:#f5f7fc"></div>
<div class="vl" style="left:967.8px;top:248px;height:421px"></div>
<div class="vl" style="left:1029.5px;top:248px;height:421px"></div>
<div class="vl" style="left:1092.5px;top:248px;height:421px"></div>
<div class="vl" style="left:1195px;top:248px;height:421px"></div>
<div class="vl" style="left:1257.4px;top:248px;height:421px"></div>
<div class="vl" style="left:1340.5px;top:248px;height:421px"></div>
<div class="vl" style="left:1415px;top:275px;height:394px"></div>
<div class="dt" style="left:786.5px;top:255.5px">Name</div>
<div class="dt" style="left:972.7px;top:255.5px">Status</div>
<div class="dt" style="left:1034px;top:255.5px">Type</div>
<div class="dt" style="left:1097px;top:255.5px">Initiator</div>
<div class="dt" style="left:1199.5px;top:255.5px">Size</div>
<div class="dt" style="left:1262px;top:255.5px">Time</div>
<div class="dt" style="left:1345px;top:255.5px">Waterfall</div>
<svg style="left:0;top:0" width="1440" height="400">
 <path d="M1422 265 L1426 259.5 L1430 265 Z" fill="#474747"/>
 <!-- file icons -->
 <g fill="none" stroke="#e8710a" stroke-width="1.1">
  <rect x="788.3" y="280.3" width="11.5" height="10.5" rx="1"/>
  <path d="M792.3 284 L790.8 285.5 L792.3 287 M795.8 284 L797.3 285.5 L795.8 287"/>
 </g>
 <g fill="none" stroke="#e8710a" stroke-width="1.2" id="jsonic">
  <path d="M791 301 C789.5 301 789.8 302 789.8 304 C789.8 305.5 789 306 788.3 306 C789 306 789.8 306.5 789.8 308 C789.8 310 789.5 311 791 311"/>
  <path d="M797 301 C798.5 301 798.2 302 798.2 304 C798.2 305.5 799 306 799.7 306 C799 306 798.2 306.5 798.2 308 C798.2 310 798.5 311 797 311"/>
  <path d="M794 304 V304.6 M794 306.5 L793.3 309"/>
 </g>
 <use href="#jsonic" y="21"/>
 <use href="#jsonic" y="42"/>
 <use href="#jsonic" y="63"/>
 <!-- waterfall -->
 <rect x="1345.5" y="283" width="1" height="4.5" fill="#bdbdbd"/><rect x="1352" y="280.5" width="2" height="9.5" fill="#1ba1f2"/>
 <rect x="1347.5" y="304" width="1" height="4.5" fill="#bdbdbd"/><rect x="1351" y="301.5" width="2" height="9.5" fill="#1ba1f2"/>
 <rect x="1389.5" y="325" width="1" height="4.5" fill="#bdbdbd"/><rect x="1396" y="322.5" width="1" height="9.5" fill="#34a853"/><rect x="1397" y="322.5" width="2" height="9.5" fill="#1ba1f2"/>
 <rect x="1432.5" y="346" width="1" height="4.5" fill="#bdbdbd"/><rect x="1439" y="343.5" width="2" height="9.5" fill="#1ba1f2"/>
 <rect x="1438.5" y="367" width="1" height="4.5" fill="#bdbdbd"/>
</svg>
<div class="dt" style="left:805.5px;top:280px">atlassian-navigation.async-…</div>
<div class="dt" style="left:805.5px;top:301px">unseen?source=atlaskitNot…</div>
<div class="dt" style="left:805.5px;top:322px">unseen?source=atlaskitNot…</div>
<div class="dt" style="left:805.5px;top:343px">unseen?source=atlaskitNot…</div>
<div class="dt" style="left:805.5px;top:364px">heartbeat</div>
<div class="dt" style="left:972.7px;top:280px">200</div>
<div class="dt" style="left:972.7px;top:301px">200</div>
<div class="dt" style="left:972.7px;top:322px">200</div>
<div class="dt" style="left:972.7px;top:343px">200</div>
<div class="dt" style="left:972.7px;top:364px">200</div>
<div class="dt" style="left:1034px;top:280px">script</div>
<div class="dt" style="left:1034px;top:301px">fetch</div>
<div class="dt" style="left:1034px;top:322px">fetch</div>
<div class="dt" style="left:1034px;top:343px">fetch</div>
<div class="dt" style="left:1034px;top:364px">fetch</div>
<div class="dt" style="left:1097px;top:280px;text-decoration:underline">jira-spa.72fe95…</div>
<div class="dt" style="left:1097px;top:301px;text-decoration:underline">async-atlassia…</div>
<div class="dt" style="left:1097px;top:322px;text-decoration:underline">async-atlassia…</div>
<div class="dt" style="left:1097px;top:343px;text-decoration:underline">async-atlassia…</div>
<div class="dt" style="left:1097px;top:364px;text-decoration:underline">async-heartbe…</div>
<div class="dt" style="left:1199px;top:280px;width:53.5px;text-align:right">53.5 kB</div>
<div class="dt" style="left:1199px;top:301px;width:53.5px;text-align:right">302 B</div>
<div class="dt" style="left:1199px;top:322px;width:53.5px;text-align:right">584 B</div>
<div class="dt" style="left:1199px;top:343px;width:53.5px;text-align:right">604 B</div>
<div class="dt" style="left:1199px;top:364px;width:53.5px;text-align:right">1.7 kB</div>
<div class="dt" style="left:1260px;top:280px;width:75.5px;text-align:right">160 ms</div>
<div class="dt" style="left:1260px;top:301px;width:75.5px;text-align:right">60 ms</div>
<div class="dt" style="left:1260px;top:322px;width:75.5px;text-align:right">161 ms</div>
<div class="dt" style="left:1260px;top:343px;width:75.5px;text-align:right">136 ms</div>
<div class="dt" style="left:1260px;top:364px;width:75.5px;text-align:right">255 ms</div>
<div class="dt" style="left:973.5px;top:413px;font-size:18px;color:#f52b0f">Don't close browser developer tool</div>

<!-- summary -->
<div class="hl" style="left:782px;top:669px;width:658px"></div>
<div class="dt" style="left:792px;top:677.5px;color:#1f1f1f">5 requests</div>
<div class="vl" style="left:858px;top:675px;height:16px"></div>
<div class="dt" style="left:867px;top:677.5px;color:#1f1f1f">56.7 kB transferred</div>
<div class="vl" style="left:979.5px;top:675px;height:16px"></div>
<div class="dt" style="left:988px;top:677.5px;color:#1f1f1f">216 kB resources</div>
<div class="hl" style="left:782px;top:696px;width:658px"></div>
<!-- drawer -->
<div class="a" style="left:782px;top:697px;width:658px;height:26.5px;background:#edf1f9"></div>
<div class="hl" style="left:782px;top:723.5px;width:658px"></div>
<svg style="left:0;top:0" width="1440" height="778">
 <g fill="#474747"><circle cx="798" cy="704.8" r="1.3"/><circle cx="798" cy="710" r="1.3"/><circle cx="798" cy="715.2" r="1.3"/></g>
 <path d="M1420.5 705.5 L1430 715 M1430 705.5 L1420.5 715" stroke="#474747" stroke-width="1.4"/>
 <line x1="788.5" y1="756" x2="788.5" y2="772" stroke="#d3e3fd"/>
 <path d="M798.3 764.5 C801 760 804 758.8 807 758.8 C810 758.8 813 760 815.7 764.5 C813 769 810 770.2 807 770.2 C804 770.2 801 769 798.3 764.5 Z" fill="none" stroke="#474747" stroke-width="1.4"/>
 <circle cx="807" cy="764.5" r="2.8" fill="none" stroke="#474747" stroke-width="1.4"/>
 <line x1="825.5" y1="756" x2="825.5" y2="772" stroke="#d3e3fd"/>
 <path d="M1270 759.8 H1277.5 L1273.8 765.5 Z" fill="#474747"/>
 <line x1="1289.5" y1="756" x2="1289.5" y2="772" stroke="#d3e3fd"/>
 <path d="M1363 759 H1372 V766.5 H1365.3 L1363 768.8 Z" fill="#1a73e8"/>
 <path d="M1364.6 761.2 H1370.4 M1364.6 763.2 H1370.4 M1364.6 765.2 H1368" stroke="#fff" stroke-width=".9"/>
</svg>
<div class="dt" style="left:819.7px;top:705px;color:#0b57d0">Console</div>
<div class="a" style="left:810px;top:722px;width:64px;height:2px;background:#0b57d0"></div>
<div class="dt" style="left:883.6px;top:705px;color:#474747">Issues</div>
<div class="a" style="left:786px;top:727.4px;width:654px;height:21.2px;background:#f1f1f1"></div>
<div class="dt" style="left:789.5px;top:732.5px;color:#1f1f1f">{"extension_id":"c…</div>
<div class="a" style="left:833.5px;top:755px;width:351.5px;height:18.5px;border:1px solid #c7c7c7;border-radius:4px;background:#fff"></div>
<div class="dt" style="left:837px;top:759px;color:#8a8a8a">Filter</div>
<div class="dt" style="left:1195px;top:758.5px;color:#474747">Default levels</div>
<div class="dt" style="left:1301.5px;top:758.5px;color:#474747">13 Issues:</div>
<div class="dt" style="left:1377px;top:758.5px;color:#474747">13</div>
<div class="hl" style="left:782px;top:777px;width:658px"></div>
</div>

<!-- ============ OVERLAYS ============ -->
<!-- tooltip -->
<div class="a" style="left:82.5px;top:40.4px;width:238px;height:19.6px;background:#e6e6e6;border-radius:3px;box-shadow:0 1px 4px rgba(0,0,0,.18),0 0 0 .5px rgba(0,0,0,.08)"></div>
<div class="t" style="left:89.7px;top:44.3px;font-size:11.7px;color:#333">Reload this page, hold to see more options</div>
<!-- red box + arrow -->
<div class="a" style="left:68px;top:3px;width:39px;height:32px;border:2px solid #ff1500"></div>
<svg style="left:0;top:0" width="300" height="40">
 <path d="M119.5 18.9 L129.2 13.9 V23.9 Z" fill="#ff1500"/>
 <rect x="128" y="17.8" width="69" height="2.2" fill="#ff1500"/>
</svg>
<!-- window corner -->
<div class="a" style="left:0;top:704px;width:1px;height:74px;background:#000"></div>
<svg style="left:0;top:0" width="20" height="778"><path d="M0 770 V778 H8 A8 8 0 0 1 0 770 Z" fill="#000"/></svg>
<svg style="left:0;top:0" width="1440" height="778"><path d="M1440 770 V778 H1432 A8 8 0 0 0 1440 770 Z" fill="#222"/></svg>
</body></html>
